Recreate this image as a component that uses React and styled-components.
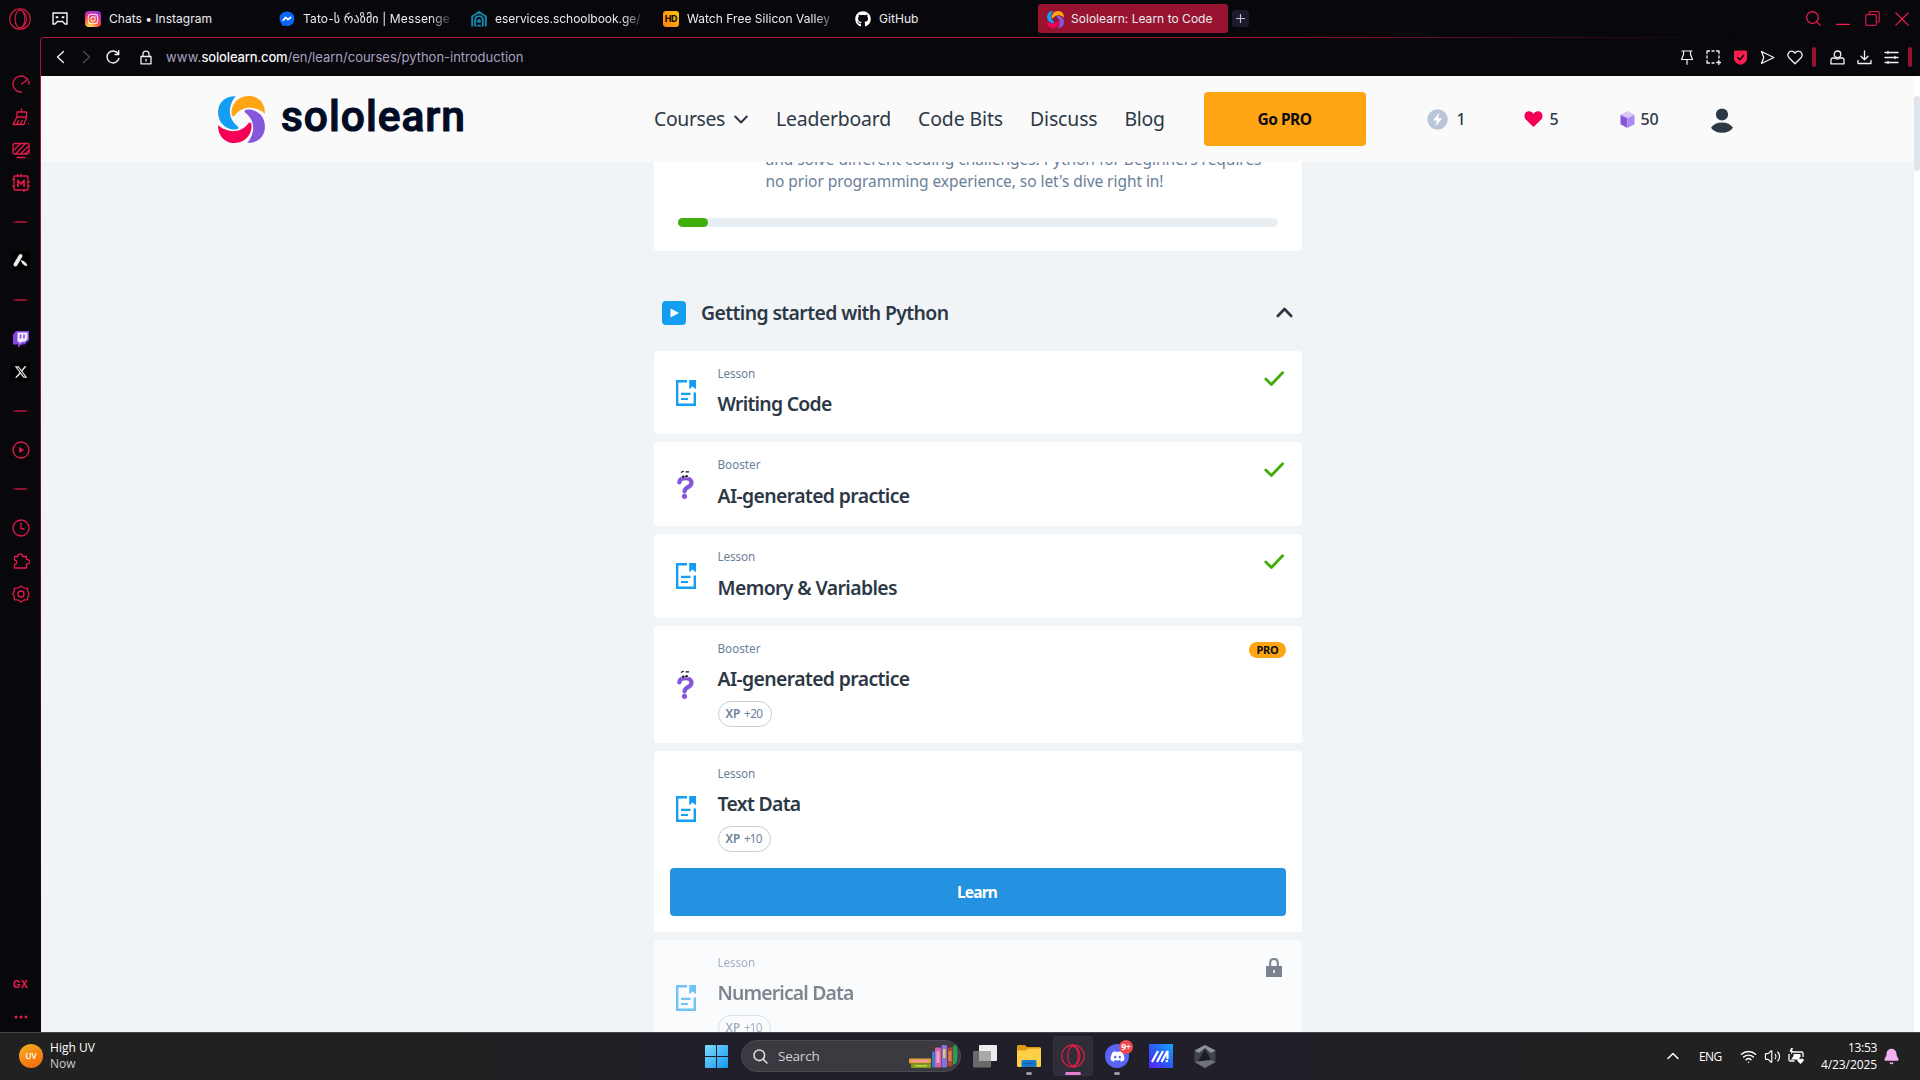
import React, { useLayoutEffect, useRef } from "react";
import styled, { createGlobalStyle, css } from "styled-components";
import { FaGithub, FaDiscord, FaInstagram, FaXTwitter } from "react-icons/fa6";
import { Bell, Volume2, Wifi } from "lucide-react";

const RED = "#fa1e4e";
const SIDE_RED = "#e51b49";
const CRIMSON = "#97132f";
const DARK = "#08070c";
const INK = "#2d3846";
const SLATE = "#6b7f99";
const UI = `Inter, "DejaVu Sans", sans-serif`;
const SITE = `"Noto Sans", "Open Sans", sans-serif`;
const SYSTEM = `"Open Sans", "Noto Sans", sans-serif`;

const Global = createGlobalStyle`
  *, *::before, *::after { box-sizing: border-box; }
  html, body { margin: 0; padding: 0; background: ${DARK}; overflow: hidden; }
  svg { display: block; flex: none; }
  button { font: inherit; border: 0; margin: 0; padding: 0; }
`;

/* ---------- text that spreads its letters over a known width ---------- */
const FitSpan = styled.span`
  display: inline-block;
  white-space: nowrap;
  flex: none;
`;
function Fit({ w, children }) {
  const ref = useRef(null);
  useLayoutEffect(() => {
    const el = ref.current;
    el.style.letterSpacing = "0px";
    const natural = el.getBoundingClientRect().width;
    el.style.letterSpacing = `${(w - natural) / el.textContent.length}px`;
  }, [w, children]);
  return <FitSpan ref={ref}>{children}</FitSpan>;
}

/* ---------- drawings ---------- */
const Line = styled.svg.attrs({ fill: "none", strokeLinecap: "round", strokeLinejoin: "round" })`
  stroke: ${(p) => p.$c || "currentColor"};
  stroke-width: ${(p) => p.$sw || 1.4};
`;

const PETAL =
  "M17.6 .2C10 -.4 4.2 3.6 1.6 9C-.9 14.500 -.2 21.500 3 26.300C6.200 31 12 33.600 17.300 33.400C20.600 33.200 21.300 31.600 19 29.700C12.800 24.900 10.900 17.600 12.200 11.200C13 6.900 15 3 17.600 .2Z";
const SoloMark = ({ size }) => (
  <svg width={size} height={size} viewBox="0 0 46.800 46.800">
    {[["#149ef2", 0], ["#ffa412", 90], ["#8557db", 180], ["#f50057", 270]].map(([c, r]) => (
      <path key={c} d={PETAL} fill={c} transform={`rotate(${r} 23.4 23.4)`} />
    ))}
  </svg>
);

const OperaRing = ({ size, c = "#d91a45" }) => (
  <Line width={size} height={size} viewBox="0 0 24 24" $c={c} $sw={1.2}>
    <circle cx="12" cy="12" r="11.200" />
    <ellipse cx="12" cy="12" rx="5.300" ry="9.800" />
    <path d="M11 1.600C16 2 19 7 19 12S16 22 11 22.400" />
  </Line>
);

const LessonIcon = () => (
  <svg width="20" height="26" viewBox="0 0 20 26">
    <path d="M11 1.200H1.200V24.800H18.800V12.500" fill="none" stroke="#149ef2" strokeWidth="2.400" />
    <path d="M13.200 0H20V9.200L16.600 6.600L13.200 9.200Z" fill="#149ef2" />
    <path d="M5 13.800H14.500M5 19H12" stroke="#149ef2" strokeWidth="2.200" />
  </svg>
);
const BoosterIcon = () => (
  <svg width="17" height="29" viewBox="0 0 17 29">
    <path d="M2.300 12.300C2.800 9.600 5.200 8.200 8.400 8.200C12 8.200 14.500 9.900 14.500 12.700C14.500 17.300 7.900 17 7.600 21.300" fill="none" stroke="#8557db" strokeWidth="4.300" strokeLinecap="round" />
    <circle cx="7.500" cy="26.300" r="2.600" fill="#8557db" />
    <ellipse cx="6.300" cy="6.300" rx="1.900" ry="2" fill="#fff" />
    <ellipse cx="9.900" cy="6.100" rx="1.900" ry="2" fill="#fff" />
    <circle cx="6.300" cy="6.700" r="1.300" fill="#10131c" />
    <circle cx="9.600" cy="6.200" r="1.300" fill="#10131c" />
    <path d="M4 2.500L6.600 1M8.600 1.900H12" stroke="#10131c" strokeWidth="1.300" />
  </svg>
);
const CheckIcon = () => (
  <Line width="21" height="16" viewBox="0 0 21 16" $c="#42ae0b" $sw={2.9}>
    <path d="M1.800 8L7.400 13.400L18.600 1.800" />
  </Line>
);
const LockIcon = () => (
  <svg width="16" height="19" viewBox="0 0 16 19">
    <path d="M4.200 8.500V5C4.200 2.500 5.900 1.100 8 1.100S11.800 2.500 11.800 5V8.500" fill="none" stroke="#79828e" strokeWidth="2" />
    <path fillRule="evenodd" d="M0 8H16V19H0ZM7.200 12V15H8.800V12Z" fill="#79828e" />
  </svg>
);

/* ---------- browser shell ---------- */
const Screen = styled.div`
  width: 1920px;
  height: 1080px;
  display: grid;
  grid-template-rows: 37px 995px 48px;
  background: ${DARK};
  font-family: ${UI};
  overflow: hidden;
`;
const TabStrip = styled.div`
  display: flex;
  align-items: center;
  padding-left: 9px;
  color: #ececf0;
`;
const StripSpace = styled.div`
  width: 45px;
  flex: none;
  display: flex;
  justify-content: flex-end;
  padding-right: 8px;
`;
const Tab = styled.div`
  display: flex;
  align-items: center;
  gap: 8px;
  width: ${(p) => p.$w || 192}px;
  height: 29px;
  padding-left: 9px;
  border-radius: 3px;
  font-size: 12px;
  line-height: 16px;
  flex: none;
  background: ${(p) => (p.$active ? CRIMSON : "transparent")};
`;
const Favicon = styled.span`
  width: 16px;
  height: 16px;
  border-radius: ${(p) => p.$r ?? 4}px;
  display: grid;
  place-items: center;
  flex: none;
  background: ${(p) => p.$bg || "transparent"};
  color: ${(p) => p.$c || "#fff"};
  font: 800 9px/16px ${UI};
  letter-spacing: -0.4px;
`;
const TabText = styled.span`
  overflow: hidden;
  width: 149px;
  ${(p) => p.$fade && css`mask-image: linear-gradient(90deg, #000 86%, transparent 101%);`}
`;
const NewTab = styled.button`
  width: 17px;
  height: 17px;
  margin-left: 4px;
  border-radius: 3px;
  background: #1c1a2a;
  color: #c4bfd6;
  display: grid;
  place-items: center;
`;
const WindowButtons = styled.div`
  display: flex;
  align-items: center;
  gap: 15px;
  margin-left: auto;
  padding-right: 11px;
`;
const Body = styled.div`
  display: grid;
  grid-template-columns: 40px 1880px;
  min-height: 0;
`;
const Sidebar = styled.aside`
  display: flex;
  flex-direction: column;
  align-items: flex-start;
  padding-top: 30px;
  margin-bottom: -1px;
  color: ${SIDE_RED};
`;
const SideItem = styled.div`
  height: 33px;
  width: 41px;
  flex: none;
  display: grid;
  place-items: center;
  font: 700 10px/10px ${UI};
`;
const SideRule = styled.div`
  width: 41px;
  height: 45px;
  flex: none;
  display: grid;
  place-items: center;
  &::after {
    content: "";
    width: 17px;
    height: 2px;
    background: linear-gradient(90deg, transparent, #8f122f 25%, #8f122f 75%, transparent);
  }
`;
const SideTile = styled.div`
  width: 19px;
  height: 19px;
  border-radius: 3px;
  background: #000;
  color: #e8e8ea;
  display: grid;
  place-items: center;
`;
const Grow = styled.div`
  flex: 1;
`;
const FrameEdge = styled.div`
  padding: 1px 0 0 1px;
  border-top-left-radius: 4px;
  background: linear-gradient(90deg, #a51534 62%, transparent 90%) top / 100% 1px no-repeat,
    linear-gradient(180deg, #a51534 0%, #8a1230 35%, ${DARK} 90%) left / 4px 100% no-repeat;
`;
const Frame = styled.div`
  display: grid;
  grid-template-rows: 38px 956px;
  height: 994px;
  border-top-left-radius: 3px;
  background: ${DARK};
`;
const AddressBar = styled.div`
  display: flex;
  align-items: center;
  padding: 0 8px 0 13px;
  color: #f2f2f4;
`;
const Url = styled.div`
  display: flex;
  align-items: center;
  gap: 14px;
  margin-left: 20px;
  font-size: 13px;
  line-height: 20px;
  color: #aaa2c0;
  b { font-weight: 500; color: #f4f4f6; }
`;
const AddressTools = styled.div`
  display: flex;
  align-items: center;
  margin-left: auto;
`;
const Tool = styled.div`
  width: 27px;
  display: grid;
  place-items: center;
`;
const RedBar = styled.div`
  width: 4px;
  height: 20px;
  border-radius: 2px;
  background: ${CRIMSON};
  margin: 0 ${(p) => p.$r || 0}px 0 ${(p) => p.$l || 0}px;
`;
const NavIcons = styled.div`
  display: flex;
  align-items: center;
  gap: 14px;
`;

/* ---------- web page ---------- */
const Viewport = styled.div`
  display: grid;
  grid-template-columns: 1873px 6px;
  height: 956px;
  overflow: hidden;
  background: #fff;
`;
const ScrollTrack = styled.div`
  padding-top: 20px;
  &::before {
    content: "";
    display: block;
    height: 75px;
    border-radius: 3px;
    background: #e0e5e9;
  }
`;
const Page = styled.div`
  height: 956px;
  overflow: hidden;
  background: #f0f4f7;
  font-family: ${SITE};
  color: ${INK};
`;
const Header = styled.header`
  height: 86px;
  display: flex;
  align-items: center;
  padding-left: 177px;
  background: #fafafa;
`;
const Brand = styled.div`
  display: flex;
  align-items: center;
  gap: 16px;
  width: 436px;
  color: #020b24;
`;
const Wordmark = styled.span`
  font: 500 42.500px/46px Roboto, sans-serif;
  -webkit-text-stroke: 1.1px #020b24;
  paint-order: stroke;
  padding-bottom: 5px;
`;
const Nav = styled.nav`
  display: flex;
  align-items: center;
  gap: 27px;
  font-size: 19.400px;
  line-height: 28px;
`;
const NavItem = styled.a`
  display: flex;
  align-items: center;
  gap: 9px;
  width: ${(p) => p.$w}px;
`;
const ProButton = styled.button`
  width: 162px;
  height: 54px;
  margin-left: 39px;
  padding-bottom: 1px;
  border-radius: 4px;
  background: #ffa412;
  color: #0a0d14;
  font: 700 15.500px/24px ${SITE};
`;
const Stat = styled.div`
  display: flex;
  align-items: center;
  gap: ${(p) => p.$gap}px;
  width: ${(p) => p.$w}px;
  font-size: 16px;
  font-weight: 500;
  line-height: 22px;
`;
const Stats = styled.div`
  display: flex;
  align-items: center;
  margin-left: 61px;
`;
const Avatar = styled.div`
  padding-top: 3px;
`;
const Column = styled.main`
  width: 648px;
  margin-left: 613px;
  display: flex;
  flex-direction: column;
`;
const CourseCard = styled.section`
  height: 89px;
  overflow: hidden;
  display: flex;
  flex-direction: column;
  justify-content: flex-end;
  padding: 0 24px 24px;
  border-radius: 0 0 4px 4px;
  background: #fff;
`;
const Description = styled.p`
  margin: 0 0 26px 87.500px;
  font-size: 15.500px;
  line-height: 22px;
  color: ${SLATE};
  flex: none;
`;
const Progress = styled.div`
  height: 9px;
  flex: none;
  border-radius: 5px;
  background: #e9eef2;
  &::before {
    content: "";
    display: block;
    width: 5%;
    height: 9px;
    border-radius: 5px;
    background: #42ae0b;
  }
`;
const SectionHead = styled.div`
  height: 76px;
  margin-top: 24px;
  display: flex;
  align-items: center;
  gap: 15px;
  padding: 0 9px 0 8px;
`;
const PlayTile = styled.span`
  width: 24px;
  height: 24px;
  border-radius: 4px;
  background: #149ef2;
  display: grid;
  place-items: center;
`;
const Heading = styled.h2`
  margin: 0 auto 0 0;
  font-size: 19.400px;
  font-weight: 600;
  line-height: 28px;
`;
const CardList = styled.div`
  display: flex;
  flex-direction: column;
  gap: 8px;
`;
const Card = styled.article`
  height: ${(p) => p.$h}px;
  flex: none;
  border-radius: 4px;
  background: ${(p) => (p.$locked ? "#fafbfd" : "#fff")};
`;
const CardTop = styled.div`
  height: ${(p) => p.$h}px;
  display: grid;
  grid-template-columns: 63.500px 1fr auto;
`;
const CardIcon = styled.div`
  display: grid;
  place-items: center;
  padding-bottom: ${(p) => (p.$lift ? 2 : 0)}px;
  opacity: ${(p) => (p.$locked ? 0.6 : 1)};
`;
const CardText = styled.div`
  padding-top: 13px;
  opacity: ${(p) => (p.$locked ? 0.6 : 1)};
`;
const Kind = styled.div`
  font-size: 11.700px;
  line-height: 18px;
  color: ${SLATE};
`;
const Title = styled.h3`
  margin: ${(p) => p.$mt}px 0 0;
  font-size: 19.400px;
  font-weight: 600;
  line-height: 28px;
`;
const Xp = styled.div`
  display: flex;
  gap: 4px;
  width: ${(p) => p.$w}px;
  height: 26px;
  margin-top: 8px;
  padding: 2px 0 0 7px;
  border: 1px solid #c4cfdc;
  border-radius: 13px;
  font-size: 11.800px;
  line-height: 18px;
  color: ${SLATE};
  b { font-weight: 600; }
`;
const Status = styled.div`
  padding: ${(p) => p.$pad};
`;
const ProBadge = styled.div`
  width: 37px;
  height: 16px;
  border-radius: 8px;
  background: #ffa412;
  color: #0a0d14;
  text-align: center;
  font: 700 11px/16px ${SITE};
`;
const LearnButton = styled.button`
  display: block;
  width: 616px;
  height: 48px;
  margin-left: 16px;
  padding: 0 2px 1px 0;
  border-radius: 4px;
  background: #2492e0;
  color: #fff;
  font: 700 15.500px/24px ${SITE};
`;

/* ---------- taskbar ---------- */
const Taskbar = styled.footer`
  display: flex;
  align-items: center;
  border-top: 1px solid #46454a;
  background: linear-gradient(90deg, #212121 0, #212121 20%, #211f29 38%, #211f29 62%, #212122 85%);
  font-family: ${SYSTEM};
  font-size: 12px;
  color: #fff;
  padding-bottom: 1px;
`;
const Weather = styled.div`
  display: flex;
  align-items: center;
  gap: 7px;
  width: 705px;
  padding-left: 19px;
  line-height: 16px;
`;
const UvBadge = styled.span`
  width: 24px;
  height: 24px;
  border-radius: 50%;
  background: linear-gradient(150deg, #f0b429, #f5810f 60%, #ee6a0c);
  font: 600 8.500px/24px ${SYSTEM};
  text-align: center;
`;
const Muted = styled.div`
  color: #c9c9c9;
`;
const SearchBox = styled.div`
  width: 220px;
  height: 32px;
  margin: 0 12px 0 13px;
  padding: 0 2px 0 11px;
  display: flex;
  align-items: center;
  gap: 10px;
  border-radius: 16px;
  border: 1px solid #4b4a51;
  background: #3b3a41;
  font-size: 13.500px;
  color: #d2d1d6;
`;
const Books = styled.span`
  margin-left: auto;
`;
const AppSlot = styled.div`
  width: 44px;
  margin-left: ${(p) => p.$gap || 0}px;
  display: flex;
  justify-content: center;
`;
const Tile = styled.div`
  position: relative;
  width: 40px;
  height: 40px;
  border-radius: 4px;
  display: grid;
  place-items: center;
  background: ${(p) => (p.$active ? "#2f2d37" : "transparent")};
  box-shadow: ${(p) => (p.$active ? "inset 0 0 0 1px #34323c" : "none")};
`;
const Indicator = styled.span`
  position: absolute;
  left: 50%;
  bottom: 1px;
  width: ${(p) => (p.$active ? 16 : 6)}px;
  height: 3px;
  border-radius: 2px;
  transform: translateX(-50%);
  background: ${(p) => (p.$active ? "#e07fd4" : "#9a999e")};
`;
const CountBadge = styled.span`
  position: absolute;
  top: 4px;
  right: 4px;
  width: 14px;
  height: 14px;
  border-radius: 50%;
  background: #f0484d;
  font: 700 8.500px/14px ${SYSTEM};
  text-align: center;
`;
const DiscordDisc = styled.span`
  width: 24px;
  height: 24px;
  border-radius: 50%;
  background: #5865f2;
  display: grid;
  place-items: center;
`;
const Tray = styled.div`
  display: flex;
  align-items: center;
  margin-left: auto;
  padding-right: 20px;
`;
const TraySlot = styled.div`
  width: ${(p) => p.$w}px;
  flex: none;
`;
const Clock = styled.div`
  width: 57px;
  text-align: right;
  line-height: 17px;
  margin-right: 6px;
`;

const side = (children) => (
  <Line width="18" height="18" viewBox="0 0 18 18" $sw={1.3}>{children}</Line>
);

const lessons = [
  { kind: "Lesson", kw: 37.5, title: "Writing Code", tw: 114, h: 83, mt: 8, state: "done" },
  { kind: "Booster", kw: 43, title: "AI-generated practice", tw: 192, h: 84, mt: 9, state: "done" },
  { kind: "Lesson", kw: 37.5, title: "Memory & Variables", tw: 179.5, h: 84, mt: 9, state: "done" },
  { kind: "Booster", kw: 43, title: "AI-generated practice", tw: 192, h: 117, mt: 8, state: "pro", xp: "+20" },
  { kind: "Lesson", kw: 37.5, title: "Text Data", tw: 83, h: 181, mt: 8, state: "next", xp: "+10" },
  { kind: "Lesson", kw: 37.5, title: "Numerical Data", tw: 136, h: 181, mt: 8, state: "locked", xp: "+10" },
];

function LessonCard({ kind, kw, title, tw, h, mt, state, xp }) {
  const locked = state === "locked";
  return (
    <Card $h={h} $locked={locked}>
      <CardTop $h={Math.min(h, 117)}>
        <CardIcon $locked={locked} $lift={h > 117}>{kind === "Lesson" ? <LessonIcon /> : <BoosterIcon />}</CardIcon>
        <CardText $locked={locked}>
          <Kind><Fit w={kw}>{kind}</Fit></Kind>
          <Title $mt={mt}><Fit w={tw}>{title}</Fit></Title>
          {xp && <Xp $w={xp === "+20" ? 54.5 : 53.5}><b><Fit w={14.5}>XP</Fit></b><Fit w={xp === "+20" ? 18.5 : 17.5}>{xp}</Fit></Xp>}
        </CardText>
        {state === "done" && <Status $pad="20px 17px 0 0"><CheckIcon /></Status>}
        {state === "pro" && <Status $pad="16px 16px 0 0"><ProBadge><Fit w={22}>PRO</Fit></ProBadge></Status>}
        {locked && <Status $pad="18px 20px 0 0"><LockIcon /></Status>}
      </CardTop>
      {state === "next" && <LearnButton><Fit w={40}>Learn</Fit></LearnButton>}
    </Card>
  );
}

function Tabs() {
  return (
    <TabStrip>
      <OperaRing size={22} />
      <StripSpace>
        <Line width="16" height="13" viewBox="0 0 16 13" $c="#f4f4f6" $sw={1.4}>
          <path d="M1 1H15V12H13L10.500 9.500H5.500L3 12H1Z" strokeLinejoin="miter" />
          <path d="M4.500 5.200H5.500M10.500 5.200H11.500" strokeWidth="2" />
        </Line>
      </StripSpace>
      <Tab $w={194}>
        <Favicon $bg="radial-gradient(circle at 30% 105%, #ffd64a 10%, #fb5a36 40%, #d92aa0 68%, #6a3cf0 100%)"><FaInstagram size={12} /></Favicon>
        <TabText><Fit w={103}>Chats • Instagram</Fit></TabText>
      </Tab>
      <Tab>
        <Favicon>
          <svg width="16" height="16" viewBox="0 0 16 16">
            <path d="M8 .6C3.700 .6 .6 3.700 .6 7.700C.6 9.900 1.500 11.700 3 13L3.100 15.300L5.400 14.600C6.200 14.800 7.100 15 8 15C12.300 15 15.400 11.800 15.400 7.700S12.300 .6 8 .6Z" fill="#0866ff" />
            <path d="M3.800 9.800L6.600 6.400L9 8.700L12.200 6" fill="none" stroke="#fff" strokeWidth="1.700" strokeLinejoin="round" />
          </svg>
        </Favicon>
        <TabText $fade><Fit w={147}>Tato-ს რაზმი | Messenge</Fit></TabText>
      </Tab>
      <Tab>
        <Favicon>
          <svg width="16" height="16" viewBox="0 0 16 16">
            <path d="M1.200 15.500V5.500L8 1L14.800 5.500V15.500M4.200 15.500V8.500C4.200 6.500 6 5.200 8 5.200S11.800 6.500 11.800 8.500V15.500" fill="none" stroke="#1484a8" strokeWidth="2" />
            <circle cx="8" cy="10" r="2" fill="#1484a8" /><path d="M5.500 15.500C5.500 13 10.500 13 10.500 15.500Z" fill="#1484a8" />
          </svg>
        </Favicon>
        <TabText $fade><Fit w={145.5}>eservices.schoolbook.ge/</Fit></TabText>
      </Tab>
      <Tab>
        <Favicon $bg="linear-gradient(45deg,#ff7a18,#ffc800)" $r={3} $c="#1a1208">HD</Favicon>
        <TabText $fade><Fit w={143}>Watch Free Silicon Valley</Fit></TabText>
      </Tab>
      <Tab>
        <Favicon><FaGithub size={16} /></Favicon>
        <TabText><Fit w={39.5}>GitHub</Fit></TabText>
      </Tab>
      <Tab $w={190} $active>
        <Favicon><SoloMark size={17} /></Favicon>
        <TabText><Fit w={141.5}>Sololearn: Learn to Code</Fit></TabText>
      </Tab>
      <NewTab><Line width="9" height="9" viewBox="0 0 9 9" $sw={1.2}><path d="M4.500 .5V8.500M.5 4.500H8.500" /></Line></NewTab>
      <WindowButtons>
        <Line width="15" height="15" viewBox="0 0 15 15" $c={RED} $sw={1.2}><circle cx="6.500" cy="6.500" r="5.800" /><path d="M10.800 10.800L14.300 14.300" /></Line>
        <Line width="14" height="15" viewBox="0 0 14 15" $c={RED} $sw={1.3}><path d="M.8 13.400H13.200" /></Line>
        <Line width="15" height="15" viewBox="0 0 15 15" $c="#c91a41" $sw={1.2}><rect x=".7" y="3.700" width="10.600" height="10.600" rx="1" /><path d="M4 3.500V1.800Q4 .7 5 .7H13.300Q14.300 .7 14.300 1.700V10Q14.300 11 13.300 11H11.500" /></Line>
        <Line width="14" height="14" viewBox="0 0 14 14" $c={RED} $sw={1.2}><path d="M.8 .8L13.200 13.200M13.200 .8L.8 13.200" /></Line>
      </WindowButtons>
    </TabStrip>
  );
}

function Side() {
  return (
    <Sidebar>
      <SideItem>{side(<path d="M15 3.700A8 8 0 1 0 9.500 17M16.500 6.200A8 8 0 0 1 17 9M9.500 9L15.800 4.500" />)}</SideItem>
      <SideItem>{side(<path d="M9.500 .8V4M5 4H14.500V9H5ZM5 9L1 16.500H12L14.500 9M5 16.200L6.500 12.500M9 16.200L10 12.500M16.500 15.300V15.600" />)}</SideItem>
      <SideItem>{side(<><rect x="1" y="2.500" width="16" height="10.500" rx="1.500" /><path d="M5 16.500H13M2 9L8 3M4 12.500L13 3M9 12.500L16.500 5M13.500 12.500L16.500 9.500" /></>)}</SideItem>
      <SideItem>{side(<><rect x="2" y="2" width="14" height="14" rx="1" /><path d="M6 12V6.500L9 10L12 6.500V12" strokeWidth="1.800" /><path d="M5.500 .6V2M9 .6V2M12 16V17.400M.6 5.500H2M.6 12H2M16 8H17.400M16 12H17.400" /></>)}</SideItem>
      <SideRule />
      <SideItem><SideTile><svg width="15" height="15" viewBox="0 0 15 15"><path d="M2.500 11.500L7.500 3" stroke="#ececec" strokeWidth="3.800" strokeLinecap="round" /><path d="M7.800 7.300C10 6.800 14.500 10.500 14.200 12.800C12.500 14 8.500 10.500 7.800 7.300Z" fill="#ececec" /></svg></SideTile></SideItem>
      <SideRule />
      <SideItem>
        <svg width="18" height="18" viewBox="0 0 18 18"><path d="M4 1H17V10L12.500 14.500H9.500L6 17.800V14.500H1V4.500Z" fill="#8344e8" /><path d="M5.500 2.500H15.500V9L12.800 11.800H10L7.500 14V11.800H5.500Z" fill="#f1ecfb" /><path d="M8.500 4.500V8.500M12 4.500V8.500" stroke="#8344e8" strokeWidth="1.500" /></svg>
      </SideItem>
      <SideItem><SideTile><FaXTwitter size={14} /></SideTile></SideItem>
      <SideRule />
      <SideItem>{side(<><circle cx="9" cy="9" r="8" /><path d="M7.800 7L11 9L7.800 11Z" fill="currentColor" /></>)}</SideItem>
      <SideRule />
      <SideItem>{side(<><circle cx="9" cy="9" r="8" /><path d="M9 4V9.500L12 10" /></>)}</SideItem>
      <SideItem>{side(<path d="M2.500 4.500H6C5.500 1 10.500 1 10.500 4.500H14.500V7.500C18.500 7 18.500 12.500 14.500 12V16H2.500V12.500C5.500 12 5.500 8.500 2.500 8Z" />)}</SideItem>
      <SideItem>{side(<><circle cx="9" cy="9" r="3" /><path d="M9 1L11.500 2.800L15.500 3.300L16 7L17.300 9L16 11L15.500 14.700L11.500 15.200L9 17L6.500 15.200L2.500 14.700L2 11L.7 9L2 7L2.500 3.300L6.500 2.800Z" /></>)}</SideItem>
      <Grow />
      <SideItem><Fit w={15.5}>GX</Fit></SideItem>
      <SideItem><svg width="14" height="4" viewBox="0 0 14 4"><g fill={SIDE_RED}><circle cx="2" cy="2" r="1.500" /><circle cx="7" cy="2" r="1.500" /><circle cx="12" cy="2" r="1.500" /></g></svg></SideItem>
    </Sidebar>
  );
}

function Address() {
  return (
    <AddressBar>
      <NavIcons>
        <Line width="14" height="14" viewBox="0 0 14 14"><path d="M9.500 1.500L3.500 7L9.500 12.500" /></Line>
        <Line width="10" height="14" viewBox="0 0 10 14" $c="#4a4855"><path d="M1.500 1.500L7.500 7L1.500 12.500" /></Line>
        <Line width="14" height="14" viewBox="0 0 14 14"><path d="M12 3.500A6 6 0 1 0 12.900 8.500M12.700 .8V4.500H9" /></Line>
      </NavIcons>
      <Url>
        <Line width="12" height="15" viewBox="0 0 12 15" $c="#f2f2f4" $sw={1.3}><path d="M1 6.500H11V13.800H1ZM3 6.500V4C3 .2 9 .2 9 4V6.500M6 9.500V11" /></Line>
        <span><Fit w={35.5}>www.</Fit><b><Fit w={86}>sololearn.com</Fit></b><Fit w={236}>/en/learn/courses/python-introduction</Fit></span>
      </Url>
      <AddressTools>
        <Tool><Line width="14" height="15" viewBox="0 0 14 15" $sw={1.2}><path d="M2 1H12M3.500 1V4.500L1.500 9.500H12.500L10.500 4.500V1M7 9.500V14.300" /></Line></Tool>
        <Tool><Line width="15" height="15" viewBox="0 0 15 15" $sw={1.3}><path d="M1 3.500V1H3.500M6 1H8M10.500 1H13V3.500M13 6V8M1 6V8M1 10.500V13H3.500M6 13H8M12.800 10.500V14.500M10.800 12.500H14.500" /></Line></Tool>
        <Tool><svg width="15" height="15" viewBox="0 0 15 15"><path d="M1 2Q1 .5 2.500 .5H12.500Q14 .5 14 2V8.500C14 12 10.500 14 7.500 14.800C4.500 14 1 12 1 8.500Z" fill={RED} /><path d="M4.300 7.300L6.800 9.700L11 5" fill="none" stroke={DARK} strokeWidth="1.500" /></svg></Tool>
        <Tool><Line width="15" height="15" viewBox="0 0 15 15" $sw={1.3}><path d="M1.500 1.500L13.800 7.500L1.500 13.500L3.800 7.500Z" /></Line></Tool>
        <Tool><Line width="16" height="15" viewBox="0 0 16 15" $sw={1.3}><path d="M8 13.700L2 7.800C-.5 5 1.500 1.200 4.500 1.200C6.200 1.200 7.300 2 8 3.200C8.700 2 9.800 1.200 11.500 1.200C14.500 1.200 16.500 5 14 7.800Z" /></Line></Tool>
        <RedBar $l={4} $r={8} />
        <Tool><Line width="15" height="15" viewBox="0 0 15 15" $sw={1.3}><circle cx="7.500" cy="4.300" r="3.300" /><path d="M4.700 8H3Q1 8 1 10V13.800H14V10Q14 8 12 8H10.300C8.500 9.300 6.500 9.300 4.700 8Z" /></Line></Tool>
        <Tool><Line width="15" height="15" viewBox="0 0 15 15" $sw={1.3}><path d="M7.500 1V9.500M4 6.300L7.500 9.700L11 6.300M1 10.500V13.500H14V10.500" /></Line></Tool>
        <Tool><Line width="15" height="15" viewBox="0 0 15 15" $sw={1.3}><path d="M1 2.500H14M1 7.500H14M1 12.500H14M4 1.500V3.500M11 6.500V8.500M4 11.500V13.500" /></Line></Tool>
        <RedBar $l={3} />
      </AddressTools>
    </AddressBar>
  );
}

function SiteHeader() {
  return (
    <Header>
      <Brand><SoloMark size={47} /><Wordmark><Fit w={185}>sololearn</Fit></Wordmark></Brand>
      <Nav>
        <NavItem $w={95}><Fit w={71}>Courses</Fit><Line width="14" height="9" viewBox="0 0 14 9" $sw={2}><path d="M1.200 1.500L7 7.500L12.800 1.500" /></Line></NavItem>
        <NavItem $w={115}><Fit w={115}>Leaderboard</Fit></NavItem>
        <NavItem $w={85}><Fit w={85}>Code Bits</Fit></NavItem>
        <NavItem $w={67.5}><Fit w={67.5}>Discuss</Fit></NavItem>
        <NavItem $w={40}><Fit w={40}>Blog</Fit></NavItem>
      </Nav>
      <ProButton><Fit w={54}>Go PRO</Fit></ProButton>
      <Stats>
        <Stat $gap={9} $w={97}>
          <svg width="21" height="21" viewBox="0 0 21 21"><circle cx="10.500" cy="10.500" r="10.200" fill="#b9c6d8" /><path d="M12.500 3.500L5.800 11.500H10L8.500 17.500L15.200 9.300H11Z" fill="#fff" /></svg>
          <Fit w={8}>1</Fit>
        </Stat>
        <Stat $gap={7} $w={96}>
          <svg width="19" height="16" viewBox="0 0 19 16"><path d="M9.500 16L2 8.800C-1 5.500 .8 .3 4.800 .3C7 .3 8.600 1.300 9.500 3C10.400 1.300 12 .3 14.200 .3C18.200 .3 20 5.500 17 8.800Z" fill="#f50057" /></svg>
          <Fit w={9}>5</Fit>
        </Stat>
        <Stat $gap={6} $w={91}>
          <svg width="15" height="17" viewBox="0 0 15 17"><path d="M.5 3.700L7.500 0L14.500 3.700L7.500 7.200Z" fill="#d6c9f5" /><path d="M.5 3.700L7.500 7.200V17L.5 13.200Z" fill="#8557db" /><path d="M14.500 3.700L7.500 7.200V17L14.500 13.200Z" fill="#ad8bf0" /></svg>
          <Fit w={18}>50</Fit>
        </Stat>
        <Avatar>
          <svg width="22" height="25" viewBox="0 0 22 25"><circle cx="11" cy="6.500" r="6.100" fill={INK} /><path d="M0 19.800C2.500 16.300 6 14.500 11 14.500S19.500 16.300 22 19.800C19.500 23.200 16 24.800 11 24.800S2.500 23.200 0 19.800Z" fill={INK} /></svg>
        </Avatar>
      </Stats>
    </Header>
  );
}

function Bar() {
  return (
    <Taskbar>
      <Weather>
        <UvBadge>UV</UvBadge>
        <div><div><Fit w={45}>High UV</Fit></div><Muted><Fit w={25.5}>Now</Fit></Muted></div>
      </Weather>
      <svg width="23" height="23" viewBox="0 0 23 23">
        <defs><linearGradient id="win" x1="0" y1="0" x2="1" y2="1"><stop stopColor="#7fdcff" /><stop offset="1" stopColor="#1597f0" /></linearGradient></defs>
        <path d="M0 1Q0 0 1 0H11V11H0ZM12 0H22Q23 0 23 1V11H12ZM0 12H11V23H1Q0 23 0 22ZM12 12H23V22Q23 23 22 23H12Z" fill="url(#win)" />
      </svg>
      <SearchBox>
        <Line width="15" height="15" viewBox="0 0 15 15" $c="#dededf" $sw={1.6}><circle cx="6.300" cy="6.300" r="5.300" /><path d="M10.200 10.200L14 14" /></Line>
        <Fit w={41.5}>Search</Fit>
        <Books>
          <svg width="49" height="23" viewBox="0 0 49 23">
            <rect x="0" y="13.500" width="22" height="5" rx="1" fill="#e6a33a" /><rect x="4" y="14.800" width="15" height="2.400" fill="#f39a9e" />
            <rect x="2" y="18.500" width="20" height="4.500" rx="1.500" fill="#7a9d1f" /><rect x="6" y="20" width="12" height="1.500" fill="#c9cf49" />
            <rect x="23" y="6.500" width="3" height="16" fill="#2d7fd0" /><rect x="26" y="2.500" width="6" height="20" rx="1" fill="#d95fa8" /><rect x="27.500" y="6" width="3" height="12" fill="#f49fc4" />
            <rect x="32.500" y="0" width="5.500" height="22.500" rx="1" fill="#8a6fe0" /><rect x="34" y="4" width="2.500" height="9" fill="#e8c95b" />
            <rect x="38.500" y="2.500" width="5" height="19" fill="#a8482a" /><rect x="39.500" y="6" width="3" height="10" fill="#d98146" />
            <path d="M44 1L47.500 0C49 6 49 13 47.500 18L44 20Z" fill="#2f9a55" />
          </svg>
        </Books>
      </SearchBox>
      <svg width="24" height="23" viewBox="0 0 24 23"><rect x="6" y="0" width="18" height="16" rx="1" fill="#ededee" /><rect x="0" y="6" width="18" height="16.500" rx="1" fill="#6a6a6c" /><path d="M6 6H18V16H6Z" fill="#a8a8aa" /></svg>
      <AppSlot $gap={10}>
        <Tile>
          <svg width="24" height="22" viewBox="0 0 24 22"><path d="M0 1.500Q0 0 1.500 0H8L10 2H22.500Q24 2 24 3.500V8H0Z" fill="#e09a10" /><path d="M0 5.500H9L11 3.500H24V20.500Q24 22 22.500 22H1.500Q0 22 0 20.500Z" fill="#ffcf48" /><path d="M4.500 22V16.500Q4.500 15 6 15H18Q19.500 15 19.500 16.500V22Z" fill="#1479cf" /><path d="M8 18.500H16" stroke="#0b5aa6" strokeWidth="1.200" /></svg>
          <Indicator />
        </Tile>
      </AppSlot>
      <AppSlot><Tile $active><OperaRing size={24} c="#e51b49" /><Indicator $active /></Tile></AppSlot>
      <AppSlot><Tile><DiscordDisc><FaDiscord size={15} /></DiscordDisc><CountBadge>9+</CountBadge><Indicator /></Tile></AppSlot>
      <AppSlot>
        <Tile>
          <svg width="24" height="24" viewBox="0 0 24 24"><defs><linearGradient id="arm" x1="0" y1="1" x2="1" y2="0"><stop stopColor="#5a1ff5" /><stop offset=".5" stopColor="#2a5cf2" /><stop offset="1" stopColor="#12a6ff" /></linearGradient></defs><rect width="24" height="24" fill="url(#arm)" /><path d="M3 18L9 7M8 18L14 7M12.500 18L18.500 7V15" fill="none" stroke="#fff" strokeWidth="2.200" /><circle cx="17.800" cy="17" r="1.300" fill="#fff" /></svg>
        </Tile>
      </AppSlot>
      <AppSlot>
        <Tile>
          <svg width="22" height="23" viewBox="0 0 22 23"><path d="M11 0L21.500 5.500V17L11 23L.5 17V5.500Z" fill="#3f454b" /><path d="M11 0L21.500 5.500L17 8L11 3L5 8L.5 5.500Z" fill="#8d949a" /><path d="M11 4L17 15L4 16.500Z" fill="#1b1d22" /><path d="M4 16.500L17 15L21.500 17L11 23L.5 17Z" fill="#6b7379" /></svg>
        </Tile>
      </AppSlot>
      <Tray>
        <TraySlot $w={32}><Line width="12" height="8" viewBox="0 0 12 8" $sw={1.5}><path d="M1 6.500L6 1.500L11 6.500" /></Line></TraySlot>
        <TraySlot $w={41}><Fit w={22.5}>ENG</Fit></TraySlot>
        <TraySlot $w={24}><Wifi size={17} strokeWidth={2} /></TraySlot>
        <TraySlot $w={24}><Volume2 size={17} strokeWidth={1.6} /></TraySlot>
        <TraySlot $w={32}>
          <svg width="17" height="16" viewBox="0 0 17 16"><path d="M5 4H13.500Q15 4 15 5.500V9M6.500 13H2.500Q1 13 1 11.500V6" fill="none" stroke="#fff" strokeWidth="1.300" /><path d="M5.500 6H12.500V9L10 11.500H3L5.500 8Z" fill="#fff" /><path d="M3 0L1.500 4H3.500L2.500 7L6 3H4L5 0Z" fill="#fff" /><path d="M12.500 16L9.500 13C8.500 11 11 9.500 12.500 11.200C14 9.500 16.500 11 15.500 13Z" fill="#fff" /></svg>
        </TraySlot>
        <Clock><div><Fit w={29}>13:53</Fit></div><div><Fit w={56}>4/23/2025</Fit></div></Clock>
        <Bell size={17} fill="#f4b0f0" color="#f4b0f0" strokeWidth={2} />
      </Tray>
    </Taskbar>
  );
}

export default function App() {
  return (
    <Screen>
      <Global />
      <Tabs />
      <Body>
        <Side />
        <FrameEdge>
          <Frame>
            <Address />
            <Viewport>
              <Page>
                <SiteHeader />
                <Column>
                  <CourseCard>
                    <Description>
                      <Fit w={496}>and solve different coding challenges. Python for Beginners requires</Fit>
                      <br />
                      <Fit w={398}>no prior programming experience, so let's dive right in!</Fit>
                    </Description>
                    <Progress />
                  </CourseCard>
                  <SectionHead>
                    <PlayTile><svg width="9" height="10" viewBox="0 0 9 10"><path d="M.5 .5L9 5L.5 9.500Z" fill="#fff" /></svg></PlayTile>
                    <Heading><Fit w={247.5}>Getting started with Python</Fit></Heading>
                    <Line width="17" height="13" viewBox="0 0 17 13" $sw={2.6}><path d="M1.800 9L8.500 2L15.200 9" /></Line>
                  </SectionHead>
                  <CardList>
                    {lessons.map((l, i) => <LessonCard key={i} {...l} />)}
                  </CardList>
                </Column>
              </Page>
              <ScrollTrack />
            </Viewport>
          </Frame>
        </FrameEdge>
      </Body>
      <Bar />
    </Screen>
  );
}
